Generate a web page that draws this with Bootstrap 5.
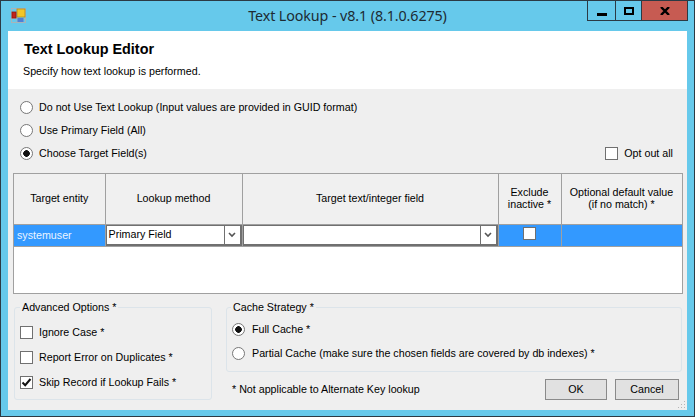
<!DOCTYPE html>
<html lang="en">
<head>
<meta charset="utf-8">
<title>Text Lookup</title>
<link href="https://cdn.jsdelivr.net/npm/bootstrap@5.3.0/dist/css/bootstrap.min.css" rel="stylesheet">
<style>
html,body{margin:0;background:#66c9eb;}
body{font-family:"Liberation Sans",Arial,sans-serif;font-size:10.7px;line-height:13px;color:#000;width:695px;height:417px;overflow:hidden;}
.win-frame{position:relative;width:695px;height:417px;border:1px solid #2b3a44;background:#66c9eb;}
.win-title{display:grid;grid-template-columns:1fr auto 1fr;height:30px;}
.win-icon{margin:7px 0 0 10px;display:block;}
.win-name{font-family:"Noto Sans","Liberation Sans",sans-serif;font-size:14.3px;line-height:30px;color:#1d2b33;letter-spacing:-.1px;}
.win-ctrls{justify-self:end;display:flex;height:20px;margin-right:6px;border:1px solid #2b3a44;border-top:0;}
.ctrl-btn{display:flex;align-items:center;justify-content:center;height:100%;}
.ctrl-min{width:28px;border-right:1px solid #2b3a44;}
.ctrl-max{width:26px;border-right:1px solid #2b3a44;}
.ctrl-close{width:45px;background:#c75b52;}
.win-client{margin:0 7px;width:679px;height:379px;background:#efefef;}
.head-pane{height:58px;background:#fff;padding:10px 0 0 16px;}
.head-title{font-size:14.4px;line-height:16px;font-weight:700;margin:0 0 7px;}
.head-sub{line-height:14px;margin:0 0 0 -1px;}
.radio-zone{padding:7px 4px 0 12px;height:84px;}
.opt-line{height:23px;display:flex;align-items:center;gap:6px;margin:0;}
.tick,.dot{appearance:none;flex:none;width:13px;height:13px;margin:0;background:#fff;border:1px solid #707070;}
.dot{border-radius:50%;border-color:#777;}
.dot:checked{background:radial-gradient(circle at center,#111 0 3px,#fff 3.6px);}
.tick{border-radius:0;}
.tick:checked{background:#fff url("data:image/svg+xml,%3Csvg xmlns='http://www.w3.org/2000/svg' viewBox='0 0 11 11'%3E%3Cpath d='M1.5 5.5 4.2 8.2 9.5 2' fill='none' stroke='%23111' stroke-width='2'/%3E%3C/svg%3E") center/11px no-repeat;}
.opt-out{margin:0 10px 0 0;gap:6px;}
.grid-box{margin-left:5px;width:670px;height:121px;background:#fff;border:1px solid #a0a0a0;}
.grid-tbl{table-layout:fixed;width:668px;border-collapse:collapse;}
.grid-tbl th{height:50px;background:#f0f0f0;font-weight:400;text-align:center;vertical-align:middle;padding:0 1px 2px;border-right:1px solid #a0a0a0;border-bottom:1px solid #a0a0a0;line-height:12px;}
.grid-tbl td{height:22px;padding:0;background:#3399ff;color:#eaf4ff;vertical-align:middle;border-right:1px solid #a0a0a0;border-bottom:1px solid #a0a0a0;}
.grid-tbl td.name-cell{padding-left:3px;}
.combo-box{display:flex;height:21px;background:#fff;border:1px solid #707070;border-width:1px 2px 2px 1px;color:#000;align-items:center;margin-left:0;}
.combo-txt{flex:1;padding-left:2px;}
.combo-arrow{width:16px;height:100%;border-left:1px solid #707070;display:flex;align-items:center;justify-content:center;background:#fff;}
.bottom-zone{display:flex;gap:14px;padding:7px 5px 0 6px;}
.group-frame{border:1px solid #dce4ea;border-radius:3px;margin:0;padding:0;min-width:0;}
.group-frame legend{float:none;width:auto;font-size:10.7px;line-height:13px;margin:0 0 0 5px;padding:0 2px;}
.group-adv{width:198px;height:99px;}
.group-adv .opt-line{height:25px;}
.adv-list{margin-top:6px;padding-left:5px;}
.right-col{width:456px;}
.group-cache{height:71px;}
.group-cache legend{margin-left:4px;}
.group-cache .opt-line{height:24px;gap:7px;}
.cache-list{margin-top:3px;padding-left:5px;}
.foot-line{display:flex;align-items:center;justify-content:space-between;margin-top:7px;padding:0 3px 0 6px;}
.foot-btns{display:flex;gap:8px;}
.win-btn{height:21px;padding:0;border-radius:0;border:1px solid #8a8a8a;background:#e1e1e1;font-size:10.7px;line-height:13px;color:#000;font-family:inherit;}
.btn-ok{width:62px;}
.btn-cancel{width:64px;}
.size-grip{position:absolute;right:8px;bottom:7px;display:block;}
</style>
</head>
<body>
<div class="win-frame">
  <div class="win-title">
    <svg class="win-icon" width="15" height="15" viewBox="0 0 15 15">
      <rect x=".5" y=".5" width="14" height="14" fill="none" stroke="#a9b4b8"/>
      <rect x="5.5" y="0" width="1" height="15" fill="#a9b4b8"/>
      <rect x="0" y="10" width="15" height="1" fill="#a9b4b8"/>
      <rect x="6" y="1" width="8" height="8" fill="#f2c628" stroke="#b58a1e" stroke-width=".8"/>
      <rect x="1" y="4" width="4" height="6" fill="#c4231c" stroke="#8c1712" stroke-width=".8"/>
      <rect x="6.5" y="10" width="6" height="4" fill="#4f7fd6"/>
    </svg>
    <div class="win-name">Text Lookup - v8.1 (8.1.0.6275)</div>
    <div class="win-ctrls">
      <div class="ctrl-btn ctrl-min"><svg width="10" height="4" viewBox="0 0 10 4" class="mt-2"><rect width="10" height="3" fill="#000"/></svg></div>
      <div class="ctrl-btn ctrl-max"><svg width="10" height="8" viewBox="0 0 10 8"><rect x="1" y="1" width="8" height="6" fill="none" stroke="#000" stroke-width="2"/></svg></div>
      <div class="ctrl-btn ctrl-close"><svg width="10" height="8" viewBox="0 0 10 8"><path d="M1 0 9 8M9 0 1 8" stroke="#000" stroke-width="2.4"/></svg></div>
    </div>
  </div>
  <div class="win-client">
    <div class="head-pane">
      <h1 class="head-title">Text Lookup Editor</h1>
      <p class="head-sub">Specify how text lookup is performed.</p>
    </div>
    <div class="radio-zone">
      <label class="opt-line"><input class="dot" type="radio" name="mode">Do not Use Text Lookup (Input values are provided in GUID format)</label>
      <label class="opt-line"><input class="dot" type="radio" name="mode">Use Primary Field (All)</label>
      <div class="d-flex justify-content-between">
        <label class="opt-line"><input class="dot" type="radio" name="mode" checked>Choose Target Field(s)</label>
        <label class="opt-line opt-out"><input class="tick" type="checkbox">Opt out all</label>
      </div>
    </div>
    <div class="grid-box">
      <table class="grid-tbl">
        <colgroup><col style="width:91px"><col style="width:137px"><col style="width:256px"><col style="width:63px"><col style="width:121px"></colgroup>
        <thead>
          <tr><th>Target entity</th><th>Lookup method</th><th>Target text/integer field</th><th>Exclude<br>inactive *</th><th>Optional default value<br>(if no match) *</th></tr>
        </thead>
        <tbody>
          <tr>
            <td class="name-cell">systemuser</td>
            <td><div class="combo-box"><span class="combo-txt">Primary Field</span><span class="combo-arrow"><svg width="8" height="6" viewBox="0 0 8 6"><path d="M1 1 4 4 7 1" fill="none" stroke="#555" stroke-width="1.6"/></svg></span></div></td>
            <td><div class="combo-box"><span class="combo-txt"></span><span class="combo-arrow"><svg width="8" height="6" viewBox="0 0 8 6"><path d="M1 1 4 4 7 1" fill="none" stroke="#555" stroke-width="1.6"/></svg></span></div></td>
            <td class="text-center"><input class="tick d-block mx-auto mb-1" type="checkbox"></td>
            <td></td>
          </tr>
        </tbody>
      </table>
    </div>
    <div class="bottom-zone">
      <fieldset class="group-frame group-adv">
        <legend>Advanced Options *</legend>
        <div class="adv-list">
          <label class="opt-line"><input class="tick" type="checkbox">Ignore Case *</label>
          <label class="opt-line"><input class="tick" type="checkbox">Report Error on Duplicates *</label>
          <label class="opt-line"><input class="tick" type="checkbox" checked>Skip Record if Lookup Fails *</label>
        </div>
      </fieldset>
      <div class="right-col">
        <fieldset class="group-frame group-cache">
          <legend>Cache Strategy *</legend>
          <div class="cache-list">
            <label class="opt-line"><input class="dot" type="radio" name="cache" checked>Full Cache *</label>
            <label class="opt-line"><input class="dot" type="radio" name="cache">Partial Cache (make sure the chosen fields are covered by db indexes) *</label>
          </div>
        </fieldset>
        <div class="foot-line">
          <span>* Not applicable to Alternate Key lookup</span>
          <div class="foot-btns">
            <button class="btn win-btn btn-ok" type="button">OK</button>
            <button class="btn win-btn btn-cancel" type="button">Cancel</button>
          </div>
        </div>
      </div>
    </div>
  </div>
  <svg class="size-grip" width="9" height="9" viewBox="0 0 9 9" fill="#b5b5b5"><rect x="7" y="1" width="1" height="1"/><rect x="4" y="4" width="1" height="1"/><rect x="7" y="4" width="1" height="1"/><rect x="1" y="7" width="1" height="1"/><rect x="4" y="7" width="1" height="1"/><rect x="7" y="7" width="1" height="1"/></svg>
</div>
<script src="https://cdn.jsdelivr.net/npm/bootstrap@5.3.0/dist/js/bootstrap.bundle.min.js"></script>
</body>
</html>
